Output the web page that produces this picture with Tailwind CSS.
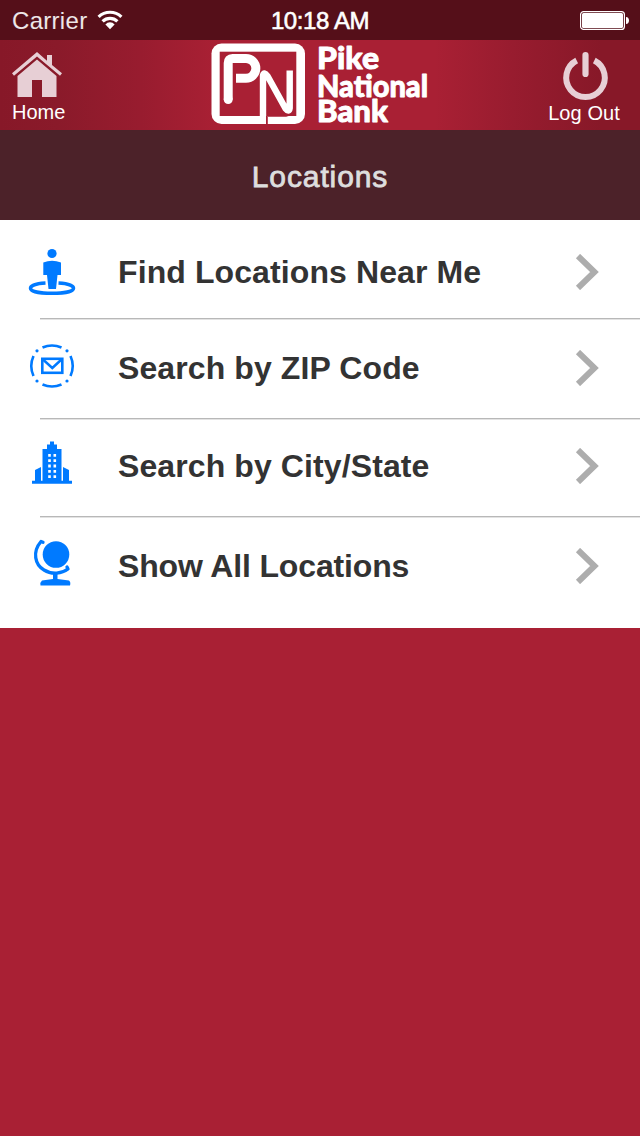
<!DOCTYPE html>
<html lang="en">
<head>
<meta charset="utf-8">
<title>Pike National Bank - Locations</title>
<script src="https://cdn.jsdelivr.net/npm/@tailwindcss/browser@4"></script>
</head>
<body class="w-[640px] h-[1136px] overflow-hidden bg-[#a92034] font-['Liberation_Sans',Arial,sans-serif] flex flex-col">
<div class="h-10 shrink-0 bg-[#550f19] text-white text-2xl leading-[42px] grid grid-cols-3">
  <div class="flex pl-3">
    <span class="tracking-[0.3px] text-white/90">Carrier</span>
    <svg class="w-[26px] h-[20px] mt-[10px] ml-[10px]" viewBox="0 0 26 20" fill="none" stroke="#fff" stroke-width="3.2">
      <path d="M1.6 6.8A16.5 16.5 0 0 1 24.4 6.8"/><path d="M5.6 11.4A10.6 10.6 0 0 1 20.4 11.4"/><path d="M13 19.2L8.4 14.5A6 6 0 0 1 17.6 14.5Z" fill="#fff" stroke="none"/>
    </svg>
  </div>
  <div class="text-center whitespace-nowrap tracking-[-0.4px] [-webkit-text-stroke:0.6px_#fff]">10:18 AM</div>
  <div class="flex justify-end pr-[10px] pt-[10px]">
    <svg class="w-[50px] h-5" viewBox="0 0 50 20"><rect x=".6" y="1.6" width="43.8" height="17.8" rx="3" fill="none" stroke="#fff" stroke-width="1.2"/><rect x="2" y="3" width="41" height="15" rx="1.5" fill="#fff"/><path d="M46 7c4 0 4 7 0 7z" fill="#fff"/></svg>
  </div>
</div>
<header class="h-[90px] shrink-0 flex justify-between text-white text-[20px] leading-6 bg-[linear-gradient(90deg,#871828_0%,#8a1a2a_9%,#981c2f_22%,#a92034_34%,#a92034_68%,#981c2f_80%,#871828_94%,#871828_100%)]">
  <div class="w-[211px] pl-[11px] pt-[10px] flex flex-col">
    <svg class="w-[52px] h-[50px]" viewBox="0 0 52 50" fill="#e7cfd5"><path d="M26 2L36 10.700V5h5v10L51 23.300l-2 2.500L26 6.500 3 25.800 1 23.300z"/><path d="M26 9.500L45.500 26V47H31V30H21V47H6.500V26z"/></svg>
    <span class="pl-px">Home</span>
  </div>
  <svg class="w-[220px] h-[90px]" viewBox="211 40 220 90" fill="none" stroke="#fff">
    <rect x="211.500" y="43.500" width="93.500" height="80.500" rx="10" fill="#fff" stroke="none"/>
    <rect x="219.700" y="51.700" width="76.600" height="64.300" fill="#a92034" stroke="none"/>
    <path d="M228.200 99.500V63Q228.200 58.500 232.500 58.500H246A9.750 9.750 0 0 1 246 78.200H236" stroke-width="9"/>
    <circle cx="228.200" cy="99.500" r="4.500" fill="#fff" stroke="none"/>
    <path d="M263 120V75.500Q264 71 267.500 76L285.500 108.500Q289 113 289.700 108V70.500" stroke-width="6.400" stroke-linejoin="round"/>
    <path d="M266.900 116V124.500" stroke="#a92034" stroke-width="1.800"/>
    <path d="M268 116H286Q293.500 115.500 294.500 108V102" stroke="#a92034" stroke-width="1.400"/>
    <g fill="#fff" stroke-width=".9" stroke-linejoin="round" font-family="Lato, sans-serif" font-weight="900" font-size="31">
      <text x="317" y="69" textLength="62" lengthAdjust="spacingAndGlyphs">Pike</text>
      <text x="317" y="96.500" textLength="111" lengthAdjust="spacingAndGlyphs">National</text>
      <text x="317" y="122" textLength="71" lengthAdjust="spacingAndGlyphs">Bank</text>
    </g>
  </svg>
  <div class="w-[209px] pr-5 pt-[10px] flex flex-col items-end">
    <svg class="w-[50px] h-[51px] mr-[10px]" viewBox="0 0 50 51" fill="none" stroke="#e7cfd5"><path d="M16.700 10.500A19.300 19.300 0 1 0 34.300 10.500" stroke-width="6"/><path d="M25.500 5V24" stroke-width="6.200" stroke-linecap="round"/></svg>
    <span class="tracking-[0.1px]">Log Out</span>
  </div>
</header>
<h1 class="h-[90px] shrink-0 bg-[#4c2229] text-[#dedede] text-[30px] leading-[94px] text-center tracking-[0.900px] [-webkit-text-stroke:0.800px_#dedede]">Locations</h1>
<main class="bg-white text-[#333] text-[32px] leading-9 font-bold flex flex-col">
  <a class="relative h-[100px] flex items-start pl-5 after:absolute after:left-10 after:right-0 after:bottom-0 after:h-0.5 after:bg-[#e3e3e3] after:border-t after:border-[#b8b8b8]">
    <svg class="size-16 mt-5" viewBox="0 0 64 64" fill="#007aff"><circle cx="32" cy="13.500" r="4.600"/><path d="M23.300 22.500Q32 19 41 22.500V35H37.500L36 49H28.500L27 35H23.300z"/><path d="M25.500 43C16 43.500 10.500 45.500 10.500 48.200C10.500 51.300 20 53.300 32 53.300S53.500 51.300 53.500 48.200C53.500 45.500 48 43.500 38.500 43" fill="none" stroke="#007aff" stroke-width="3.500"/></svg>
    <span class="ml-[34px] mt-[34px] grow tracking-[0.100px]">Find Locations Near Me</span>
    <svg class="w-6 h-9 mt-[34px] mr-[41px]" viewBox="0 0 24 36" fill="none" stroke="#adadad" stroke-width="6"><path d="M3 2L19.500 18L3 34"/></svg>
  </a>
  <a class="relative h-[100px] flex items-start pl-5 after:absolute after:left-10 after:right-0 after:bottom-0 after:h-0.5 after:bg-[#e3e3e3] after:border-t after:border-[#b8b8b8]">
    <svg class="size-16 mt-4" viewBox="0 0 64 64" fill="none" stroke="#007aff" stroke-width="2.600"><path d="M22.500 11.500Q32 7.500 41.500 11.500M22.500 48.500Q32 52.500 41.500 48.500M13.500 20Q9 30 13.500 40M50.500 20Q55 30 50.500 40"/><rect x="22.300" y="22.800" width="20" height="14" stroke-width="2.600"/><path d="M23 23.500L32.300 32L41.500 23.500" stroke-width="2.400"/><g fill="#007aff" stroke="none"><circle cx="17" cy="14.800" r="1.600"/><circle cx="47" cy="14.800" r="1.600"/><circle cx="17" cy="45" r="1.600"/><circle cx="47" cy="45" r="1.600"/></g></svg>
    <span class="ml-[34px] mt-[30px] grow tracking-[0.100px]">Search by ZIP Code</span>
    <svg class="w-6 h-9 mt-[30px] mr-[41px]" viewBox="0 0 24 36" fill="none" stroke="#adadad" stroke-width="6"><path d="M3 2L19.500 18L3 34"/></svg>
  </a>
  <a class="relative h-[98px] flex items-start pl-5 after:absolute after:left-10 after:right-0 after:bottom-0 after:h-0.5 after:bg-[#e3e3e3] after:border-t after:border-[#b8b8b8]">
    <svg class="size-16 mt-3" viewBox="0 0 64 64" fill="#007aff"><path d="M12 48.700H15V38L21 35V48.700H22.500V17H27V12.500H30V9.500H34V12.500H37V17H41.500V48.700H43V35L49 38V48.700H52V51.700H12z"/><path d="M29.500 22V47M34.800 22V47" stroke="#fff" stroke-width="2.600" stroke-dasharray="2.800 2.500"/></svg>
    <span class="ml-[34px] mt-7 grow tracking-[0.100px]">Search by City/State</span>
    <svg class="w-6 h-9 mt-7 mr-[41px]" viewBox="0 0 24 36" fill="none" stroke="#adadad" stroke-width="6"><path d="M3 2L19.500 18L3 34"/></svg>
  </a>
  <a class="h-[110px] flex items-start pl-5">
    <svg class="size-16 mt-3" viewBox="0 0 64 64" fill="#007aff"><circle cx="36" cy="24.500" r="13.300"/><path d="M23 12.300L21 11.500C12 22 15 35 24 40C32 45 42 43.500 48 39L47 37" fill="none" stroke="#007aff" stroke-width="3.300" stroke-linecap="round" stroke-linejoin="round"/><path d="M33 42H37.500V49L49 50.500Q51 52 50 55.500H20.500Q20 52 22 50.500L33 49z"/></svg>
    <span class="ml-[34px] mt-[30px] grow tracking-[-0.150px]">Show All Locations</span>
    <svg class="w-6 h-9 mt-[30px] mr-[41px]" viewBox="0 0 24 36" fill="none" stroke="#adadad" stroke-width="6"><path d="M3 2L19.500 18L3 34"/></svg>
  </a>
</main>
</body>
</html>
